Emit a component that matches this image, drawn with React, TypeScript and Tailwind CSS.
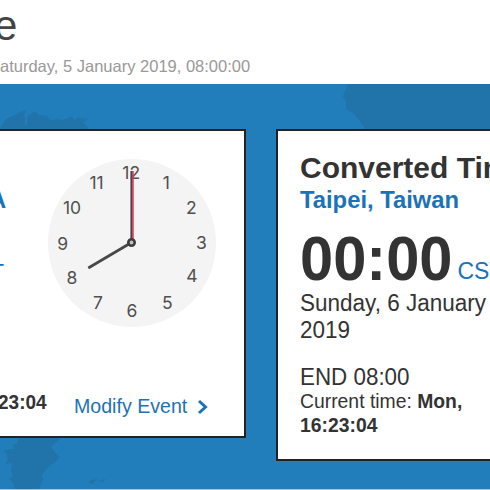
const numerals = [
  { n: '12', x: 131.2, y: 179.3 },
  { n: '1', x: 166.2, y: 189.2 },
  { n: '2', x: 191.4, y: 214 },
  { n: '3', x: 201.4, y: 249 },
  { n: '4', x: 192, y: 282 },
  { n: '5', x: 167.3, y: 309 },
  { n: '6', x: 132, y: 317 },
  { n: '7', x: 98, y: 309 },
  { n: '8', x: 72, y: 283.5 },
  { n: '9', x: 62.8, y: 249.5 },
  { n: '10', x: 72, y: 214.3 },
  { n: '11', x: 96.5, y: 189 },
];

function Clock() {
  return (
    <svg viewBox="47 158 170 170" className="h-[170px] w-[170px] shrink-0">
      <circle cx="132" cy="243" r="84" fill="#f4f4f4" />
      <g fill="#505050" fontSize="17.5" textAnchor="middle" fontFamily="Inter, Roboto, sans-serif">
        {numerals.map(({ n, x, y }) => (
          <text key={n} x={x} y={y}>{n}</text>
        ))}
      </g>
      <path d="M131.5 242.5L88.3 268" stroke="#48484a" strokeWidth="2.7" />
      <path d="M131.4 242V171" stroke="#48484a" strokeWidth="2" />
      <path d="M132.9 240V171" stroke="#d93a5c" strokeWidth="1.7" />
      <circle cx="131.5" cy="242.5" r="3.2" fill="#c0c0c0" stroke="#3c3c3e" strokeWidth="2.6" />
    </svg>
  );
}

function MapBackdrop() {
  return (
    <svg viewBox="0 84 490 405" className="absolute inset-0 h-full w-full" fill="#2074aa">
      <path d="M0 130L2 125L6 119L13 116L17 114L20 112L26 110L24 115L25 119L25 126L27 124L27 117L32 113L36 112L39 115L47 116L51 120L57 119L62 120L69 118L69 116L72 117L75 120L79 117L83 119L88 118L86 121L83 122L88 128V130Z" />
      <path d="M348 84L346 89L344 93L343 97L346 101L346 109L353 113L358 119L362 124L366 130H490V84Z" />
      <path d="M19 437H62L59 440L54 444L51 447L55 452L60 457L54 463L47 468L42 475L43 480L39 489H15L13 483L9 479L13 476L11 471L12 464L9 463L5 465L8 459L6 453L3 451L9 449L14 449L13 445L17 443Z" />
      <path d="M88 483L91 480L98 479L95 481L93 484Z M97 481L106 479L103 482Z" />
    </svg>
  );
}

function SourceCard() {
  return (
    <section className="flex h-[309px] w-[252px] shrink-0 flex-col border-2 border-[#222] bg-white pl-1">
      <div className="flex h-[198px] pt-[27px]">
        <div className="flex w-[47px] flex-col text-[#1b72b8]">
          <b className="-ml-[11px] mt-[28px] text-[23.8px] leading-[28px]">A</b>
          <span className="-ml-[10px] mt-[45px] text-[23px] leading-[28px]">T</span>
        </div>
        <Clock />
      </div>
      <div className="flex flex-1 pt-[63px]">
        <b className="-ml-[2px] w-[76px] origin-center scale-y-[1.06] self-start whitespace-nowrap text-[19px] leading-[22px]">23:04</b>
        <a className="mt-[2px] flex whitespace-nowrap text-[19.6px] leading-[24px] text-[#1b72b8]">
          <span className="scale-y-[1.04] self-start">Modify Event</span>
          <svg viewBox="0 0 12 16" className="ml-[10px] mt-[5px] h-[16px] w-[12px]" fill="none" stroke="currentColor" strokeWidth="3">
            <path d="M2 2L8.5 8L2 14" />
          </svg>
        </a>
      </div>
    </section>
  );
}

function ConvertedCard() {
  return (
    <section className="flex h-[332px] w-[300px] shrink-0 flex-col border-2 border-[#222] bg-white pl-[22px] pt-[20px]">
      <h2 className="whitespace-nowrap text-[30px] font-bold leading-[34px]">Converted Time</h2>
      <b className="mt-[1px] whitespace-nowrap text-[23.8px] leading-[28px] text-[#1b72b8]">Taipei, Taiwan</b>
      <div className="mt-[14px] flex h-[62px] items-baseline whitespace-nowrap">
        <b className="origin-center scale-y-[1.05] text-[59.6px] leading-[62px]">00:00</b>
        <span className="ml-[5px] text-[23px] leading-[28px] text-[#1b72b8]">CST</span>
      </div>
      <p className="mt-[1px] scale-y-[1.03] text-[22.5px] leading-[26px]">Sunday, 6 January<br />2019</p>
      <p className="mt-[22px] scale-y-[1.04] text-[22.4px] leading-[26px]">END 08:00</p>
      <p className="-mt-[1px] scale-y-[1.03] text-[19.35px] leading-[23px]">Current time: <b>Mon,<br />16:23:04</b></p>
    </section>
  );
}

export default function App() {
  return (
    <div className="flex h-[490px] w-[490px] flex-col overflow-hidden bg-white font-['Liberation_Sans',Arial,sans-serif] text-[#333]">
      <header className="h-[84px] shrink-0">
        <h1 className="-ml-[6px] h-[56px] pt-[1px] text-[42px] leading-[50px] text-[#444]">e</h1>
        <p className="whitespace-nowrap text-[16.5px] leading-[20px] text-[#999]">aturday, 5 January 2019, 08:00:00</p>
      </header>
      <main className="relative h-[405px] shrink-0 overflow-hidden bg-[#217eba]">
        <MapBackdrop />
        <div className="relative -ml-[6px] flex items-start gap-[30px] pt-[45px]">
          <SourceCard />
          <ConvertedCard />
        </div>
      </main>
      <div className="h-px bg-[#bbb]" />
    </div>
  );
}
